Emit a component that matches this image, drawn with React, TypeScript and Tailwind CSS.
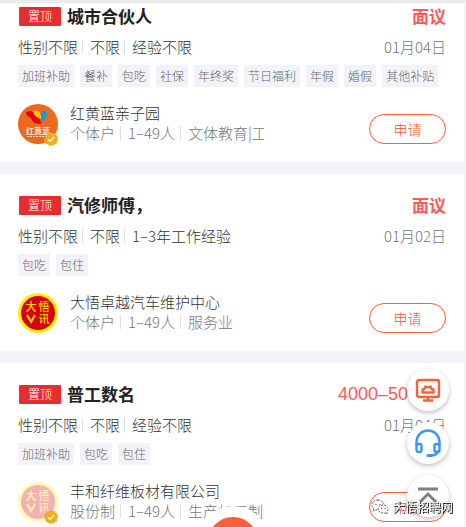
import clsx from "clsx";

type Job = {
  title: string;
  salary: string;
  negotiable: boolean;
  date: string;
  requirements: string[];
  tags: string[];
  company: string;
  details: string[];
  logo: "rainbow" | "dawu";
  faded?: boolean;
  verified?: boolean;
};

const JOBS: Job[] = [
  {
    title: "城市合伙人",
    salary: "面议",
    negotiable: true,
    date: "01月04日",
    requirements: ["性别不限", "不限", "经验不限"],
    tags: ["加班补助", "餐补", "包吃", "社保", "年终奖", "节日福利", "年假", "婚假", "其他补贴"],
    company: "红黄蓝亲子园",
    details: ["个体户", "1–49人", "文体教育|工"],
    logo: "rainbow",
    verified: true,
  },
  {
    title: "汽修师傅，",
    salary: "面议",
    negotiable: true,
    date: "01月02日",
    requirements: ["性别不限", "不限", "1–3年工作经验"],
    tags: ["包吃", "包住"],
    company: "大悟卓越汽车维护中心",
    details: ["个体户", "1–49人", "服务业"],
    logo: "dawu",
  },
  {
    title: "普工数名",
    salary: "4000–5000元",
    negotiable: false,
    date: "01月04日",
    requirements: ["性别不限", "不限", "经验不限"],
    tags: ["加班补助", "包吃", "包住"],
    company: "丰和纤维板材有限公司",
    details: ["股份制", "1–49人", "生产加工制造"],
    logo: "dawu",
    faded: true,
    verified: true,
  },
];

function RainbowLogo() {
  return (
    <svg viewBox="0 0 40 40" className="size-10" role="img" aria-label="红黄蓝">
      <circle cx="20" cy="20" r="20" fill="#ea6a20" />
      <path d="M8 8c5-2 9 0 11 3 3 3 4 6 4 9-7 0-9-3-10-6-3-1-5-3-5-6Z" fill="#e50012" />
      <path d="M15 7c5-1 8 1 8 8-4-1-7-3-8-8Z" fill="#fcc800" />
      <path d="M24 7c3-1 5 0 5 3-1 4-2 6-5 7-1-4-1-7 0-10Z" fill="#0a9be0" />
      <text x="20" y="30" textAnchor="middle" fontSize="8" fontWeight="500" fill="#fff">
        红黄蓝
      </text>
      <path d="M9 32.500h18" stroke="#fff" strokeDasharray="2 1" opacity=".8" />
    </svg>
  );
}

function DawuLogo({ faded }: { faded?: boolean }) {
  return (
    <svg viewBox="0 0 40 40" className={clsx("size-10", faded && "opacity-30")} role="img" aria-label="大悟V讯">
      <circle cx="20" cy="20" r="20" fill="#ffee00" />
      <circle cx="20" cy="20" r="17" fill="#d7000f" />
      <g fill="#ffdc00" fontSize="11" fontWeight="500" textAnchor="middle">
        <text x="13" y="18">大</text>
        <text x="26" y="18">悟</text>
        <text x="26" y="30">讯</text>
      </g>
      <path d="M9 22l4 7 4-7" fill="none" stroke="#ffdc00" strokeWidth="2" />
    </svg>
  );
}

function VerifiedMark() {
  return (
    <svg viewBox="0 0 14 14" className="absolute right-0 -bottom-0.5 size-3.5" aria-hidden="true">
      <path
        d="M7 0l1.700 1.300 2.200-.3.800 2 2 .9-.3 2.100L14 7.500l-1.200 1.700.1 2.100-2.100.6-1.200 1.800-2-.6L5.400 14l-1.300-1.700-2.200-.3-.3-2.200L0 8.200l.9-1.900L.5 4.200l2-1 .8-2 2.100.1Z"
        fill="#f2ac1c"
      />
      <path d="M4 7.200l2.200 2.200L10.200 5" fill="none" stroke="#fff" strokeWidth="1.300" />
    </svg>
  );
}

function InlineList({ items, wide }: { items: string[]; wide?: boolean }) {
  return (
    <>
      {items.map((item, i) => (
        <span key={item} className="flex shrink-0 items-center">
          {i > 0 && <i className={clsx("h-3.5 w-px bg-[#e0e0e0]", wide ? "mx-[7px] ml-[5px]" : "mr-[7px] ml-1")} />}
          {item}
        </span>
      ))}
    </>
  );
}

function JobCard({ job, first }: { job: Job; first: boolean }) {
  return (
    <article className={clsx("bg-white px-[18px] pb-[18px]", first ? "pt-px" : "pt-[19px]")}>
      <div className="flex h-6 items-center">
        <span className="ml-px flex h-[19px] w-[42px] items-center justify-center rounded-[1px] bg-[#e72e2e] text-[12px] font-light text-white">
          置顶
        </span>
        <h2 className="ml-1.5 text-[17px] leading-6 font-bold text-[#222]">{job.title}</h2>
        <strong
          className={clsx(
            "ml-auto leading-6 text-[#ff5a5a]",
            job.negotiable
              ? "text-[17px] font-bold"
              : "font-['Liberation_Sans','Noto_Sans_CJK_SC',sans-serif] text-[18px] font-normal",
          )}
        >
          {job.salary}
        </strong>
      </div>

      <div className="mt-[7px] flex h-6 items-center text-[15px] font-light text-[#333]">
        <InlineList items={job.requirements} />
        <time className="ml-auto text-[#777]">{job.date}</time>
      </div>

      <ul className="mt-1.5 flex flex-wrap gap-1.5">
        {job.tags.map((tag) => (
          <li key={tag} className="h-[22px] bg-[#f2f3f9] px-1 text-[12px] leading-[22px] font-light text-[#666]">
            {tag}
          </li>
        ))}
      </ul>

      <div className="mt-[17px] flex h-10 items-end">
        <div className="relative size-10 shrink-0">
          {job.logo === "rainbow" ? <RainbowLogo /> : <DawuLogo faded={job.faded} />}
          {job.verified && <VerifiedMark />}
        </div>
        <div className="-mt-px ml-3 w-[194px] self-start overflow-hidden text-[15px] leading-5 font-light whitespace-nowrap">
          <h3 className="text-[#333]">{job.company}</h3>
          <p className="flex text-[#777]">
            <InlineList items={job.details} wide />
          </p>
        </div>
        <button
          type="button"
          className="ml-auto h-[30px] w-[77px] rounded-full border border-[#ff5c38] text-[14px] leading-[26px] font-light text-[#ff4f2c]"
        >
          申请
        </button>
      </div>
    </article>
  );
}

const ROUND_BUTTON = "flex size-[42px] items-center justify-center rounded-full bg-white shadow-[0_2px_5px_rgba(0,0,0,0.25)]";

function FloatingButtons() {
  return (
    <div className="fixed right-[17px] bottom-[10px] flex flex-col gap-[11px]">
      <button type="button" aria-label="电脑版" className={ROUND_BUTTON}>
        <svg viewBox="0 0 26 24" className="h-6 w-[26px]" fill="none" stroke="#ff6038" strokeWidth="2.400">
          <rect x="2" y="2" width="22" height="17" rx="2" />
          <path d="M7.500 14.500h11v-3l-2-.5-1-2.500-2.500 1-2.500-1-1 2.500-2 .5Z" strokeLinejoin="round" />
          <path d="M13 19v3M8 22.500h10" />
        </svg>
      </button>
      <button type="button" aria-label="客服" className={ROUND_BUTTON}>
        <svg viewBox="0 0 28 28" className="size-7" fill="none" stroke="#3b96fb" strokeWidth="2.400" strokeLinecap="round">
          <path d="M2.500 16v-3a11.500 11.500 0 0 1 23 0v3" />
          <rect x="2.500" y="15" width="5" height="8" rx="2" />
          <rect x="20.500" y="15" width="5" height="8" rx="2" />
          <path d="M24 22c-1 3-4 4.500-7 4.500" />
          <path d="M14 26.500h3" strokeWidth="3" />
        </svg>
      </button>
      <button type="button" aria-label="返回顶部" className={ROUND_BUTTON}>
        <svg viewBox="0 0 24 24" className="size-6" fill="none" stroke="#808080" strokeWidth="3">
          <path d="M2 5h20M4 18l8-8 8 8" />
        </svg>
      </button>
    </div>
  );
}

function Watermark() {
  return (
    <div className="pointer-events-none fixed right-[13px] bottom-[11px] flex items-center gap-1">
      <svg viewBox="0 0 18 16" className="h-4 w-[18px]" fill="#fff" stroke="#666" strokeDasharray="2 1">
        <path d="M7 1C3 1 1 3 1 6c0 2 1 3 2 4l-1 2 3-1h3c3 0 5-2 5-5S10 1 7 1Z" />
        <path d="M12 6c-3 0-5 2-5 4s2 4 5 4h2l2 1v-2c1-1 1-2 1-3 0-2-2-4-5-4Z" />
        <path d="M5 5v1M9 5v1M10.500 9v1M14 9v1" stroke="#333" strokeDasharray="none" />
      </svg>
      <span className="text-[12px] leading-[18px] text-white [text-shadow:1px_1px_0_#222,0_0_1px_#333]">大悟招聘网</span>
    </div>
  );
}

export default function App() {
  return (
    <main className="h-screen overflow-hidden border-t-[3px] border-r-2 border-t-[#ebebeb] border-r-[#f2f3f9] bg-[#f2f3f9] font-['Noto_Sans_CJK_SC',sans-serif]">
      <div className="flex flex-col gap-3">
        {JOBS.map((job, i) => (
          <JobCard key={job.title} job={job} first={i === 0} />
        ))}
      </div>
      <button
        type="button"
        aria-label="发布"
        className="fixed -bottom-[51px] left-1/2 size-[72px] -translate-x-1/2 rounded-full border-[11px] border-white bg-[#ff5f36] shadow-[0_0_3px_rgba(0,0,0,0.06)]"
      />
      <FloatingButtons />
      <Watermark />
    </main>
  );
}
